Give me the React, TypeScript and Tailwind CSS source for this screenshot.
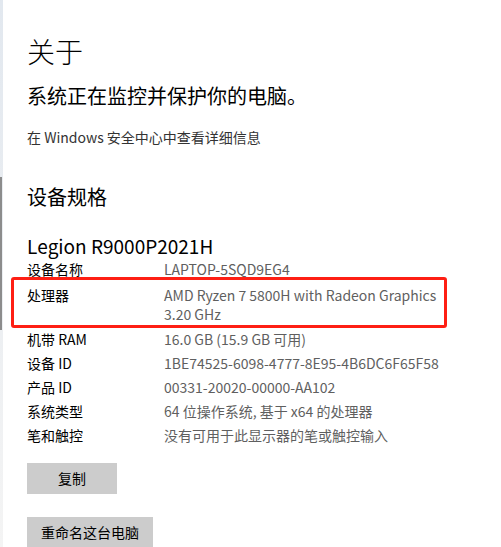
const font = { fontFamily: '"Noto Sans CJK SC", sans-serif' };

type Spec = { label: string; value: string; extra?: string };

const specs: Spec[] = [
  { label: "设备名称", value: "LAPTOP-5SQD9EG4" },
  { label: "处理器", value: "AMD Ryzen 7 5800H with Radeon Graphics", extra: "3.20 GHz" },
  { label: "机带 RAM", value: "16.0 GB (15.9 GB 可用)" },
  { label: "设备 ID", value: "1BE74525-6098-4777-8E95-4B6DC6F65F58" },
  { label: "产品 ID", value: "00331-20020-00000-AA102" },
  { label: "系统类型", value: "64 位操作系统, 基于 x64 的处理器" },
  { label: "笔和触控", value: "没有可用于此显示器的笔或触控输入" },
];

function SpecRow({ spec }: { spec: Spec }) {
  const highlighted = !!spec.extra;
  return (
    <div className={`relative flex text-[14px] ${highlighted ? "py-[2px]" : ""}`}>
      {highlighted ? (
        <div className="pointer-events-none absolute -left-[16px] -top-[6px] -bottom-[3px] w-[436px] rounded-[3px] border-[3px] border-[#fe1f14]" />
      ) : null}
      <div className="w-[137px] shrink-0 leading-[20px] text-black">{spec.label}</div>
      <div className="text-[#5f5f5f]">
        <div className="leading-[20px]">{spec.value}</div>
        {spec.extra ? <div className="leading-[18px]">{spec.extra}</div> : null}
      </div>
    </div>
  );
}

export default function App() {
  return (
    <div className="flex h-[547px] w-[501px] overflow-hidden bg-white" style={font}>
      <div className="flex w-[3px] shrink-0 flex-col bg-gradient-to-b from-[#e2e8ef] to-[#f4f4f4]">
        <div className="mt-[177px] h-[153px] w-[2px] bg-[#8c8c8c]" />
      </div>

      <main className="flex flex-col pl-[24px] pt-[33px]">
        <h1 className="text-[28px] font-light leading-[36px] text-black">关于</h1>
        <p className="mt-[13px] text-[20px] leading-[28px] text-black">系统正在监控并保护你的电脑。</p>
        <p className="mt-[17px] text-[14px] leading-[20px] text-[#333333]">在 Windows 安全中心中查看详细信息</p>

        <h2 className="mt-[36px] text-[20px] leading-[28px] text-black">设备规格</h2>
        <div className="mt-[23px] text-[19px] leading-[24px] text-black">Legion R9000P2021H</div>

        <div className="mt-[1px] flex flex-col gap-1">
          {specs.map(spec => (
            <SpecRow key={spec.label} spec={spec} />
          ))}
        </div>

        <div className="mt-[18px] flex flex-col items-start gap-[23px]">
          <button className="h-[31px] w-[90px] bg-[#cccccc] text-[14px] text-black">复制</button>
          <button className="h-[31px] bg-[#cccccc] px-[14px] text-[14px] text-black">重命名这台电脑</button>
        </div>
      </main>
    </div>
  );
}
